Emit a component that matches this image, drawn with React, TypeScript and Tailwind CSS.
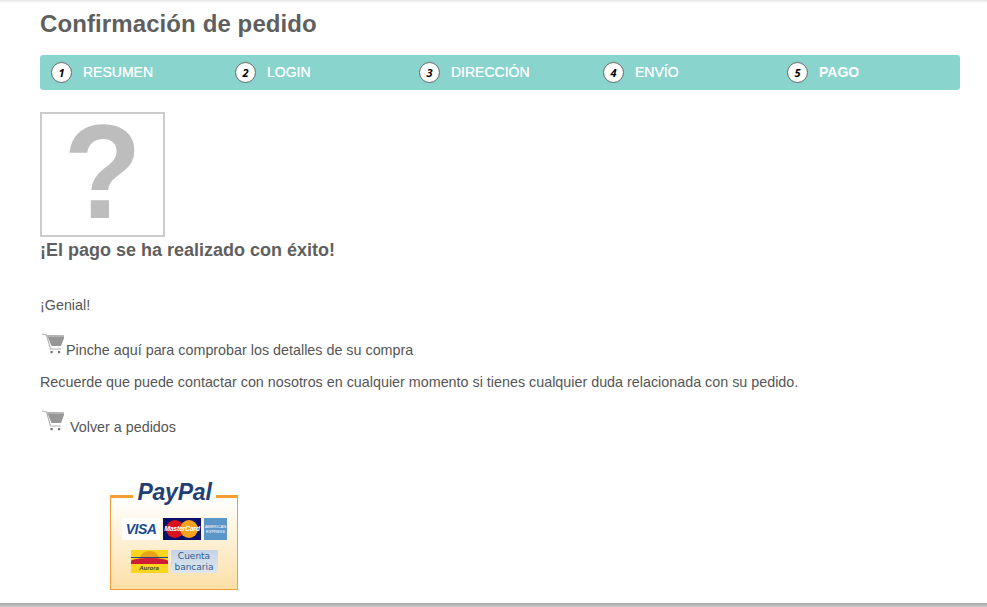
const steps = ['RESUMEN', 'LOGIN', 'DIRECCIÓN', 'ENVÍO', 'PAGO'];

function CartIcon() {
  return (
    <svg width="24" height="24" viewBox="0 0 24 24" className="block shrink-0">
      <path d="M1 1 L5.5 2 L9.5 16 L20 16" fill="none" stroke="#b0b0b0" strokeWidth="1.1" />
      <path d="M6 2 L23 2.5 L23 5 L20 13 L10.5 13 Z" fill="#979797" />
      <path d="M6 2 L23 2.5 L23 4 L6.5 4 Z" fill="#b4b4b4" />
      <rect x="9.5" y="18" width="2.2" height="2.2" fill="#6f6f6f" />
      <rect x="17" y="18" width="2.2" height="2.2" fill="#6f6f6f" />
    </svg>
  );
}

function StepCircle({ n }: { n: number }) {
  return (
    <span className="flex h-[21px] w-[21px] shrink-0 items-center justify-center rounded-full border border-[#666] bg-white font-['Open_Sans',sans-serif] text-[11px] font-bold italic leading-none text-black shadow-[inset_0_0_0_1px_#fff]">
      {n}
    </span>
  );
}

function PayPalBox() {
  return (
    <div className="relative ml-[70px] h-[95px] w-[128px] border border-t-[3px] border-[#f79d36] bg-gradient-to-b from-white to-[#fcdfa6]">
      <div className="absolute -top-[17px] left-[22px] h-[22px] w-[83px] bg-white text-center font-['Liberation_Sans',sans-serif] text-[23px] font-bold italic leading-[23px] tracking-[-0.2px] text-[#1f3f76]">
        PayPal
      </div>
      <div className="mt-[20px] flex items-start justify-center gap-[3px] pl-[1px]">
        <div className="flex h-[22px] w-[38px] items-center justify-center bg-white font-['Liberation_Sans',sans-serif] text-[14px] font-bold italic tracking-[-0.5px] text-[#1a4b8c]">
          VISA
        </div>
        <div className="relative h-[22px] w-[38px] overflow-hidden bg-[#0a0f6b]">
          <span className="absolute left-[3px] top-[2px] h-[18px] w-[18px] rounded-full bg-[#d9131d]" />
          <span className="absolute left-[17px] top-[2px] h-[18px] w-[18px] rounded-full bg-[#f7a21b]" />
          <span className="absolute inset-x-0 top-[6px] text-center font-['Liberation_Sans',sans-serif] text-[7px] font-bold italic leading-[9px] tracking-[-0.3px] text-white">
            MasterCard
          </span>
        </div>
        <div className="flex h-[22px] w-[23px] flex-col items-center justify-center bg-[#5b96c8] font-['Liberation_Sans',sans-serif] text-[4px] leading-[5px] text-white">
          <span>AMERICAN</span>
          <span>EXPRESS</span>
        </div>
      </div>
      <div className="mt-[10px] flex items-start justify-center gap-[3px]">
        <div className="relative h-[23px] w-[37px] overflow-hidden bg-[#f9d51f]">
          <span className="absolute left-[8px] top-[1px] h-[10px] w-[21px] rounded-t-full bg-[#e8a316]" />
          <span className="absolute inset-x-0 top-[8px] h-[6px] rounded-t-[50%] bg-[#d01c34]" />
          <span className="absolute inset-x-0 top-[7px] h-[1px] bg-[#2a3f92]" />
          <span className="absolute inset-x-0 top-[14px] text-center font-['Liberation_Sans',sans-serif] text-[6px] font-bold italic leading-[8px] text-[#444]">
            Aurora
          </span>
        </div>
        <div className="flex h-[23px] w-[47px] flex-col items-center justify-center bg-gradient-to-b from-[#c3d4e6] to-[#dfe6ee] font-['DejaVu_Sans',sans-serif] text-[9px] leading-[11px] text-[#2b5c8f]">
          <span>Cuenta</span>
          <span>bancaria</span>
        </div>
      </div>
    </div>
  );
}

export default function App() {
  return (
    <div className="flex h-[607px] w-[987px] flex-col overflow-hidden bg-white font-['Liberation_Sans',sans-serif] text-[14.33px] text-[#555]">
      <div className="h-[3px] shrink-0 bg-gradient-to-b from-[#e4e4e4] to-white" />
      <div className="flex-1 px-[40px]">
        <h1 className="mt-[7px] text-[24px] font-bold leading-[28px] tracking-[0.1px] text-[#5f5f5f]">Confirmación de pedido</h1>
        <div className="mt-[17px] flex h-[35px] w-[920px] items-center rounded-[3px] bg-[#89d5ce] pl-[11px]">
          {steps.map((s, i) => (
            <div key={s} className="flex w-[184px] shrink-0 items-center gap-[11px]">
              <StepCircle n={i + 1} />
              <span className={`text-[14px] text-white ${i === 4 ? 'font-bold' : 'font-normal [text-shadow:0_0_0.6px_#fff]'}`}>{s}</span>
            </div>
          ))}
        </div>
        <div className="mt-[22px] flex h-[125px] w-[125px] items-center justify-center border-2 border-[#ccc] bg-white pb-[2px] text-[128px] font-bold leading-none text-[#bdbdbd]">
          <span className="origin-[50%_80%] scale-y-[1.04]">?</span>
        </div>
        <h2 className="mt-[3px] text-[18px] font-bold leading-[20px] text-[#5f5f5f]">¡El pago se ha realizado con éxito!</h2>
        <p className="mt-[36px] leading-[18px]">¡Genial!</p>
        <div className="mt-[19px] flex items-end">
          <span className="-ml-[1px] mr-[1px] mb-[1px] pl-[2px]"><CartIcon /></span>
          <span className="leading-[16px]">Pinche aquí para comprobar los detalles de su compra</span>
        </div>
        <p className="mt-[15px] leading-[18px]">Recuerde que puede contactar con nosotros en cualquier momento si tienes cualquier duda relacionada con su pedido.</p>
        <div className="mt-[19px] flex items-end">
          <span className="-ml-[1px] mr-[5px] mb-[1px] pl-[2px]"><CartIcon /></span>
          <span className="leading-[16px]">Volver a pedidos</span>
        </div>
        <div className="mt-[60px]">
          <PayPalBox />
        </div>
      </div>
      <div className="h-[4px] shrink-0 bg-gradient-to-b from-[#a8a8a8] to-[#c8c8c8]" />
    </div>
  );
}
